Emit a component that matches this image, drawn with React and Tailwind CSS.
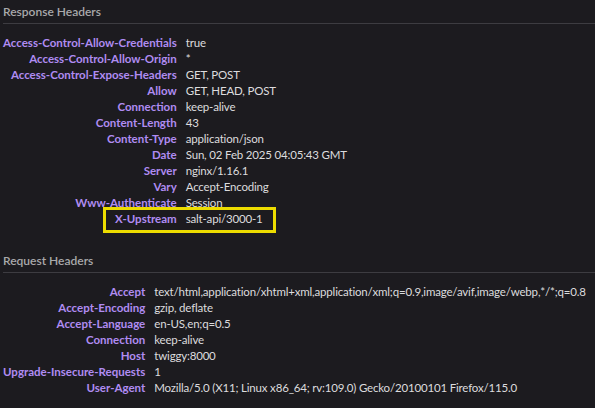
const response = [
  ['Access-Control-Allow-Credentials', 'true'],
  ['Access-Control-Allow-Origin', '*'],
  ['Access-Control-Expose-Headers', 'GET, POST'],
  ['Allow', 'GET, HEAD, POST'],
  ['Connection', 'keep-alive'],
  ['Content-Length', '43'],
  ['Content-Type', 'application/json'],
  ['Date', 'Sun, 02 Feb 2025 04:05:43 GMT'],
  ['Server', 'nginx/1.16.1'],
  ['Vary', 'Accept-Encoding'],
  ['Www-Authenticate', 'Session'],
  ['X-Upstream', 'salt-api/3000-1'],
];

const request = [
  ['Accept', 'text/html,application/xhtml+xml,application/xml;q=0.9,image/avif,image/webp,*/*;q=0.8'],
  ['Accept-Encoding', 'gzip, deflate'],
  ['Accept-Language', 'en-US,en;q=0.5'],
  ['Connection', 'keep-alive'],
  ['Host', 'twiggy:8000'],
  ['Upgrade-Insecure-Requests', '1'],
  ['User-Agent', 'Mozilla/5.0 (X11; Linux x86_64; rv:109.0) Gecko/20100101 Firefox/115.0'],
];

function Section({ title, rows, children }) {
  return (
    <div className="relative">
      <div className="pl-[3px] pt-[4px] h-[23px] text-[12px] leading-[16px] font-semibold text-[#a9a9ab]">
        {title}
      </div>
      <div className="ml-[3px] h-px bg-[#3d3c41]" />
      <div className="mt-[11px] pl-[3px] grid grid-cols-[auto_1fr] gap-x-[9px] text-[11.5px] leading-[16px]">
        {rows.map(([k, v]) => (
          <div key={k} className="contents">
            <div className="text-right font-bold text-[#b08cf2] whitespace-nowrap h-[16px]">{k}</div>
            <div className="text-[#dcdcde] whitespace-nowrap h-[16px] tracking-[-0.18px]">{v}</div>
          </div>
        ))}
      </div>
      {children}
    </div>
  );
}

export default function App() {
  return (
    <div
      className="w-[595px] h-[408px] overflow-hidden bg-[#1c1b1f]"
      style={{ fontFamily: 'Lato, "Noto Sans", sans-serif' }}
    >
      <Section title="Response Headers" rows={response}>
        <div className="absolute left-[103px] top-[207px] w-[173px] h-[26px] border-[3px] border-[#ecdc00]" />
      </Section>
      <div className="mt-[22px]">
        <Section title="Request Headers" rows={request} />
      </div>
    </div>
  );
}
